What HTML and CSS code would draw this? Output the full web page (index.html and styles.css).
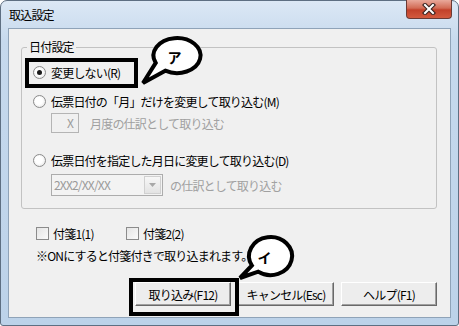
FILE: index.html
```html
<!DOCTYPE html>
<html lang="ja">
<head>
  <meta charset="UTF-8" />
  <meta name="viewport" content="width=device-width, initial-scale=1" />
  <title>取込設定</title>
  <link rel="stylesheet" href="styles.css">
</head>
<body>

  <div class="window">
    <div class="titlebar">
      <span class="title">取込設定</span>
      <span class="close">
        <svg width="14" height="12" viewBox="0 0 14 12">
          <path d="M3 2 L11 10 M11 2 L3 10" stroke="#3a2320" stroke-width="4.2" stroke-linecap="square" />
          <path d="M3 2 L11 10 M11 2 L3 10" stroke="#fff" stroke-width="2" stroke-linecap="square" />
        </svg>
      </span>
    </div>

    <div class="client">
      <fieldset class="group">
        <legend>日付設定</legend>
        <label class="opt first"><span class="radio on"></span>変更しない(R)</label>
        <label class="opt second"><span class="radio"></span>伝票日付の「月」だけを変更して取り込む(M)</label>
        <div class="sub sub-month">
          <span class="textbox">X</span>
          <span class="dim">月度の仕訳として取り込む</span>
        </div>
        <label class="opt third"><span class="radio"></span>伝票日付を指定した月日に変更して取り込む(D)</label>
        <div class="sub sub-date">
          <span class="combo">
            <span class="combo-value">2XX2/XX/XX</span>
            <span class="combo-btn">
              <svg width="7" height="4" viewBox="0 0 7 4"><path d="M0 0 H7 L3.5 4 Z" fill="#a8a8a8" /></svg>
            </span>
          </span>
          <span class="dim">の仕訳として取り込む</span>
        </div>
      </fieldset>

      <div class="checks">
        <label class="check"><span class="box"></span>付箋1(1)</label>
        <label class="check"><span class="box"></span>付箋2(2)</label>
      </div>

      <p class="note">※ONにすると付箋付きで取り込まれます。</p>

      <div class="buttons">
        <button>取り込み(F12)</button>
        <button>キャンセル(Esc)</button>
        <button>ヘルプ(F1)</button>
      </div>
    </div>
  </div>

  <!-- callouts drawn over the dialog -->
  <svg class="marks" width="459" height="326" viewBox="0 0 459 326">
    <rect x="27" y="60" width="109" height="26" fill="none" stroke="#000" stroke-width="4" />
    <rect x="131" y="280" width="106" height="34" fill="none" stroke="#000" stroke-width="4" />
    <path d="M165.3 70.7 A23.5 17.5 0 1 0 155.7 62.9 L143 83 Z" fill="#fff" stroke="#000" stroke-width="4" />
    <path d="M258.2 271.6 A21.5 19 0 1 0 251.9 265.5 L240 278 Z" fill="#fff" stroke="#000" stroke-width="4" />
    <text x="174" y="63" class="mark-text">ア</text>
    <text x="264" y="263" class="mark-text">イ</text>
  </svg>

</body>
</html>
```

FILE: styles.css
```css
body {
  margin: 0;
  position: relative;
  width: 459px;
  height: 326px;
  overflow: hidden;
  font-family: "Noto Sans CJK JP", sans-serif;
  font-size: 12px;
  letter-spacing: -0.8px;
  color: #000;
}
.window {
  box-sizing: border-box;
  width: 459px;
  height: 326px;
  border: 1px solid #5e6f82;
  border-radius: 7px 7px 3px 3px;
  background: linear-gradient(#dce8f5, #c6d9ed 40px, #bcd2e9);
  display: flex;
  flex-direction: column;
}
.titlebar {
  height: 27px;
  display: flex;
  justify-content: space-between;
  align-items: flex-start;
}
.title {
  margin: 7px 0 0 8px;
  line-height: 14px;
}
.close {
  width: 46px;
  height: 19px;
  margin: -1px 6px 0 0;
  box-sizing: border-box;
  border: 1px solid #6b3a34;
  border-top: none;
  border-radius: 0 0 4px 4px;
  background: linear-gradient(#e9a99b, #d26b55 45%, #c2412a 55%, #d35a3e);
  display: flex;
  align-items: center;
  justify-content: center;
}
.client {
  box-sizing: border-box;
  height: 290px;
  margin: 0 7px;
  padding: 11px 13px 0 12px;
  border: 1px solid #8fa3b8;
  background: #f0f0f0;
}
.group {
  margin: 0;
  padding: 0 0 12px;
  min-width: 0;
  border: 1px solid #c2c2c2;
  border-radius: 3px;
}
.group legend {
  margin-left: 5px;
  padding: 0 2px;
  line-height: 14px;
}
.opt {
  display: flex;
  align-items: center;
  gap: 5px;
  height: 20px;
  margin-left: 11px;
}
.first {
  margin-top: 8px;
}
.second {
  margin-top: 9px;
}
.third {
  margin-top: 17px;
}
.radio {
  box-sizing: border-box;
  width: 13px;
  height: 13px;
  border: 1px solid #8b8b8b;
  border-radius: 50%;
  background: radial-gradient(circle at 45% 45%, #fff 40%, #dcdcdc);
  display: grid;
  place-items: center;
}
.radio.on::after {
  content: "";
  width: 5px;
  height: 5px;
  border-radius: 50%;
  background: #1a1a1a;
}
.sub {
  display: flex;
  align-items: center;
  margin-left: 29px;
}
.sub-month {
  margin-top: 2px;
  gap: 11px;
}
.sub-date {
  margin-top: 4px;
  gap: 7px;
}
.dim {
  color: #a0a0a0;
}
.textbox {
  box-sizing: border-box;
  width: 28px;
  height: 20px;
  border: 1px solid #b4b4b4;
  padding-right: 5px;
  text-align: right;
  line-height: 18px;
  color: #9a9a9a;
}
.combo {
  box-sizing: border-box;
  width: 112px;
  height: 22px;
  border: 1px solid #acacac;
  background: #f3f3f3;
  display: flex;
}
.combo-value {
  flex: 1;
  padding-left: 2px;
  line-height: 20px;
  color: #9a9a9a;
}
.combo-btn {
  width: 15px;
  margin: 1px;
  border: 1px solid #d0d0d0;
  background: linear-gradient(#f7f7f7, #e3e3e3);
  display: flex;
  align-items: center;
  justify-content: center;
}
.checks {
  display: flex;
  height: 20px;
  align-items: center;
  margin: 14px 0 0 15px;
}
.check {
  width: 90px;
  display: flex;
  align-items: center;
  gap: 4px;
}
.box {
  box-sizing: border-box;
  width: 13px;
  height: 13px;
  border: 1px solid #8b8b8b;
  background: linear-gradient(135deg, #e4e4e4, #fbfbfb);
}
.note {
  margin: 3px 0 0 15px;
  height: 20px;
  line-height: 20px;
}
.buttons {
  display: flex;
  justify-content: flex-end;
  gap: 7px;
  margin-top: 16px;
}
button {
  width: 96px;
  height: 24px;
  padding: 0;
  font: inherit;
  letter-spacing: -0.8px;
  color: #000;
  border: 1px solid;
  border-color: #fff #696969 #696969 #fff;
  box-shadow: inset -1px -1px #a0a0a0;
  background: #ededed;
}
.marks {
  position: absolute;
  top: 0;
  left: 0;
  pointer-events: none;
}
.mark-text {
  font-family: "Noto Sans CJK JP", sans-serif;
  font-size: 14px;
  font-weight: bold;
  text-anchor: middle;
}
```
